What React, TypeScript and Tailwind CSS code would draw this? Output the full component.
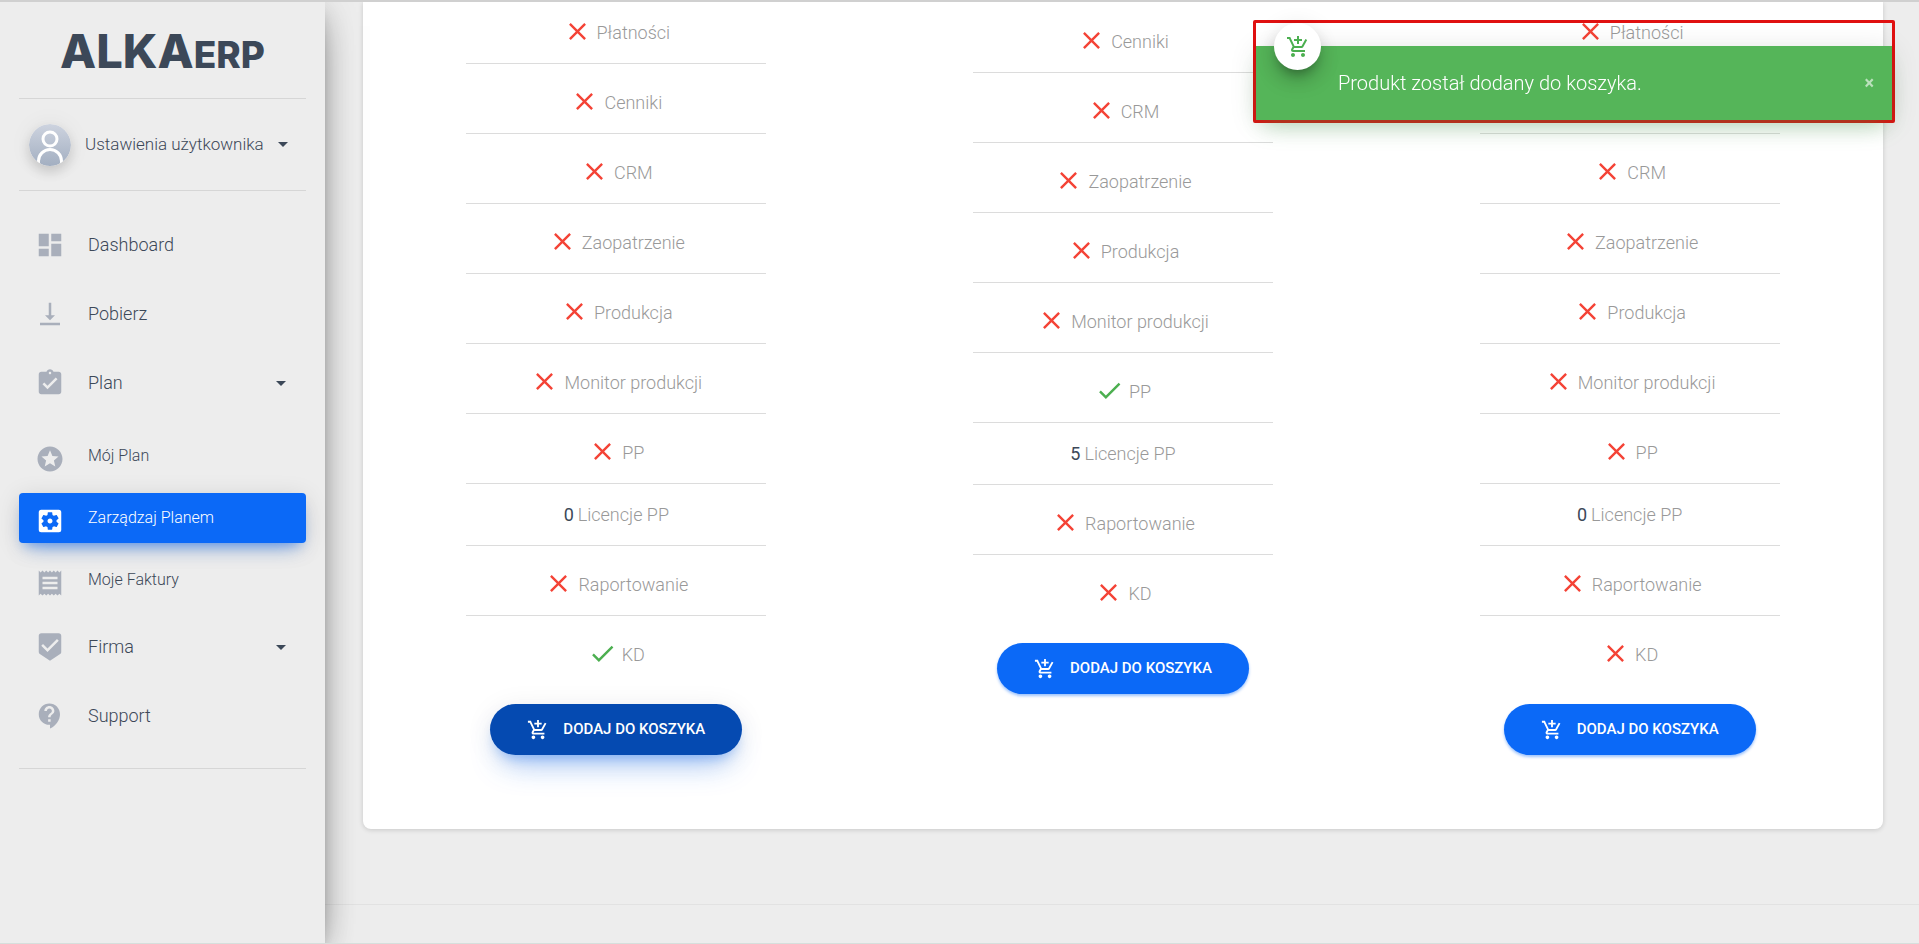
import { ReactNode, useState } from 'react'
import {
  MdAddShoppingCart,
  MdAssignmentTurnedIn,
  MdBeenhere,
  MdCheck,
  MdClose,
  MdContactSupport,
  MdDashboard,
  MdReceipt,
  MdSettingsApplications,
  MdStars,
  MdVerticalAlignBottom,
} from 'react-icons/md'

interface Feature {
  label: string
  included?: boolean
  count?: number
}

interface Plan {
  id: string
  className: string
  features: Feature[]
}

const plans: Plan[] = [
  {
    id: 'start',
    className: '-mt-2',
    features: [
      { label: 'Płatności' },
      { label: 'Cenniki' },
      { label: 'CRM' },
      { label: 'Zaopatrzenie' },
      { label: 'Produkcja' },
      { label: 'Monitor produkcji' },
      { label: 'PP' },
      { label: 'Licencje PP', count: 0 },
      { label: 'Raportowanie' },
      { label: 'KD', included: true },
    ],
  },
  {
    id: 'production',
    className: 'pt-px',
    features: [
      { label: 'Cenniki' },
      { label: 'CRM' },
      { label: 'Zaopatrzenie' },
      { label: 'Produkcja' },
      { label: 'Monitor produkcji' },
      { label: 'PP', included: true },
      { label: 'Licencje PP', count: 5 },
      { label: 'Raportowanie' },
      { label: 'KD' },
    ],
  },
  {
    id: 'basic',
    className: '-mt-2',
    features: [
      { label: 'Płatności' },
      { label: 'Cenniki' },
      { label: 'CRM' },
      { label: 'Zaopatrzenie' },
      { label: 'Produkcja' },
      { label: 'Monitor produkcji' },
      { label: 'PP' },
      { label: 'Licencje PP', count: 0 },
      { label: 'Raportowanie' },
      { label: 'KD' },
    ],
  },
]

function Caret() {
  return (
    <svg width="10" height="5" viewBox="0 0 10 5" className="shrink-0" aria-hidden="true">
      <path d="M0 0h10L5 5z" fill="#3c4858" />
    </svg>
  )
}

interface NavItemProps {
  icon: ReactNode
  label: string
  expandable?: boolean
}

function NavItem({ icon, label, expandable }: NavItemProps) {
  return (
    <a href="#" className="flex h-14 items-center pr-5 pl-4">
      <span className="text-[30px] text-[#a9afbb]">{icon}</span>
      <span className="ml-[23px] flex-1 text-lg font-light">{label}</span>
      {expandable && <Caret />}
    </a>
  )
}

interface SubItemProps {
  icon: ReactNode
  label: string
  active?: boolean
  onClick: () => void
}

function SubItem({ icon, label, active, onClick }: SubItemProps) {
  return (
    <a
      href="#"
      onClick={onClick}
      className={`flex h-[50px] items-start rounded pt-[13px] pl-4 text-base font-light ${
        active
          ? 'bg-[#0b69f7] text-white shadow-[0_12px_20px_-10px_rgba(11,105,247,0.5),0_4px_25px_rgba(0,0,0,0.12),0_7px_10px_-5px_rgba(11,105,247,0.3)]'
          : ''
      }`}
    >
      <span className={`text-[30px] ${active ? 'text-white' : 'text-[#a9afbb]'}`}>{icon}</span>
      <span className="ml-[23px]">{label}</span>
    </a>
  )
}

function Sidebar() {
  const [current, setCurrent] = useState('manage')

  return (
    <aside className="relative z-10 w-[325px] shrink-0 bg-[#ededed] px-[19px] shadow-[0_12px_38px_-12px_rgba(0,0,0,0.56),0_4px_30px_rgba(0,0,0,0.12),0_8px_12px_-5px_rgba(0,0,0,0.2)]">
      <div className="flex h-[97px] items-center justify-center border-b border-[#d6d6d6] pt-px font-[Inter,sans-serif] font-extrabold text-[#3c4858]">
        <a href="#" className="flex items-baseline">
          <span className="text-[47px] leading-none">ALKA</span>
          <span className="text-[37px] leading-none">ERP</span>
        </a>
      </div>

      <button className="flex h-[92px] w-full items-center border-b border-[#d6d6d6] pr-[18px] pl-[10px] text-left">
        <svg
          viewBox="0 0 42 42"
          className="size-[42px] shrink-0 rounded-full shadow-[0_6px_12px_rgba(0,0,0,0.14),0_0_24px_rgba(0,0,0,0.06)]"
          aria-hidden="true"
        >
          <defs>
            <linearGradient id="avatar" x1="0" y1="0" x2="0" y2="1">
              <stop offset="0" stopColor="#cdd3df" />
              <stop offset="1" stopColor="#a3afc1" />
            </linearGradient>
          </defs>
          <circle cx="21" cy="21" r="21" fill="url(#avatar)" />
          <g fill="none" stroke="#fff" strokeWidth="3">
            <circle cx="21" cy="15" r="7" />
            <path d="M9.500 39v-2a11.500 11.500 0 0 1 23 0v2" />
          </g>
        </svg>
        <span className="ml-[14px] flex-1 text-[17px] font-light">Ustawienia użytkownika</span>
        <Caret />
      </button>

      <nav className="mt-[26px] flex flex-col gap-[13px] border-b border-[#d6d6d6] pb-6">
        <NavItem icon={<MdDashboard />} label="Dashboard" />
        <NavItem icon={<MdVerticalAlignBottom />} label="Pobierz" />
        <NavItem icon={<MdAssignmentTurnedIn />} label="Plan" expandable />
        <div className="mt-[7px] mb-px flex flex-col gap-3">
          <SubItem
            icon={<MdStars />}
            label="Mój Plan"
            active={current === 'mine'}
            onClick={() => setCurrent('mine')}
          />
          <SubItem
            icon={<MdSettingsApplications />}
            label="Zarządzaj Planem"
            active={current === 'manage'}
            onClick={() => setCurrent('manage')}
          />
          <SubItem
            icon={<MdReceipt />}
            label="Moje Faktury"
            active={current === 'invoices'}
            onClick={() => setCurrent('invoices')}
          />
        </div>
        <NavItem icon={<MdBeenhere />} label="Firma" expandable />
        <NavItem icon={<MdContactSupport />} label="Support" />
      </nav>
    </aside>
  )
}

function FeatureRow({ feature }: { feature: Feature }) {
  if (feature.count !== undefined) {
    return (
      <li className="flex h-[62px] items-center justify-center gap-1 border-b border-[#dcdcdc]">
        <b className="font-normal text-[#3c4858]">{feature.count}</b>
        {feature.label}
      </li>
    )
  }

  return (
    <li className="flex h-[70px] items-center justify-center gap-[5px] border-b border-[#dcdcdc] pt-[5px] last:border-transparent">
      {feature.included ? (
        <MdCheck className="size-[29px] text-[#4caf50]" />
      ) : (
        <MdClose className="size-[29px] text-[#f44336]" />
      )}
      <span className="pt-[3px]">{feature.label}</span>
    </li>
  )
}

function PlanColumn({ plan, selected, onAdd }: { plan: Plan; selected: boolean; onAdd: () => void }) {
  return (
    <section className={`flex flex-col items-center ${plan.className}`}>
      <ul className="w-full max-w-[300px] text-lg font-light text-[#999]">
        {plan.features.map((feature) => (
          <FeatureRow key={feature.label} feature={feature} />
        ))}
      </ul>
      <button
        onClick={onAdd}
        className={`mt-[18px] flex h-[51px] items-center rounded-full px-[37px] text-[15px] font-medium text-white ${
          selected
            ? 'bg-[#054ab1] shadow-[0_18px_32px_-12px_rgba(11,105,247,0.42),0_4px_28px_rgba(0,0,0,0.08),0_8px_12px_-5px_rgba(11,105,247,0.3)]'
            : 'bg-[#0b69f7] shadow-[0_2px_3px_rgba(11,105,247,0.4)]'
        }`}
      >
        <MdAddShoppingCart className="mr-[14px] size-[22px]" />
        DODAJ DO KOSZYKA
      </button>
    </section>
  )
}

function CartAlert({ onClose }: { onClose: () => void }) {
  return (
    <div className="fixed top-5 right-6 z-20 w-[642px] rounded-xs border-[3px] border-[#e01010] pt-[23px]">
      <div
        role="alert"
        className="relative flex h-[74px] items-center justify-between bg-[#55b559] pr-[18px] pl-[82px] text-white shadow-[0_12px_25px_-8px_rgba(76,175,80,0.4),0_4px_28px_rgba(0,0,0,0.12)]"
      >
        <span className="absolute -top-[23px] left-[18px] flex size-[47px] items-center justify-center rounded-full bg-white text-[24px] text-[#4caf50] shadow-[0_12px_24px_-8px_rgba(0,0,0,0.4),0_4px_25px_rgba(0,0,0,0.12),0_8px_10px_-5px_rgba(0,0,0,0.2)]">
          <MdAddShoppingCart />
        </span>
        <p className="text-xl font-light">Produkt został dodany do koszyka.</p>
        <button onClick={onClose} aria-label="Zamknij" className="text-lg font-bold opacity-60">
          ×
        </button>
      </div>
    </div>
  )
}

export default function App() {
  const [cart, setCart] = useState('start')
  const [alertOpen, setAlertOpen] = useState(true)

  const handleAdd = (id: string) => {
    setCart(id)
    setAlertOpen(true)
  }

  return (
    <div className="flex min-h-screen flex-col overflow-hidden border-t-2 border-b border-t-[#d0d0d0] border-b-[#d6dfdc] bg-[#ededed] font-[Roboto,sans-serif] text-[#3c4858]">
      <div className="flex flex-1">
        <Sidebar />
        <div className="flex flex-1 flex-col">
          <main className="pr-9 pb-[75px] pl-[38px]">
            <div className="grid grid-cols-3 rounded-b-lg bg-white pb-[74px] shadow-[0_1px_5px_rgba(0,0,0,0.16)]">
              {plans.map((plan) => (
                <PlanColumn
                  key={plan.id}
                  plan={plan}
                  selected={cart === plan.id}
                  onAdd={() => handleAdd(plan.id)}
                />
              ))}
            </div>
          </main>
          <footer className="flex-1 border-t border-[#e2e2e2]" />
        </div>
      </div>

      {alertOpen && <CartAlert onClose={() => setAlertOpen(false)} />}
    </div>
  )
}
